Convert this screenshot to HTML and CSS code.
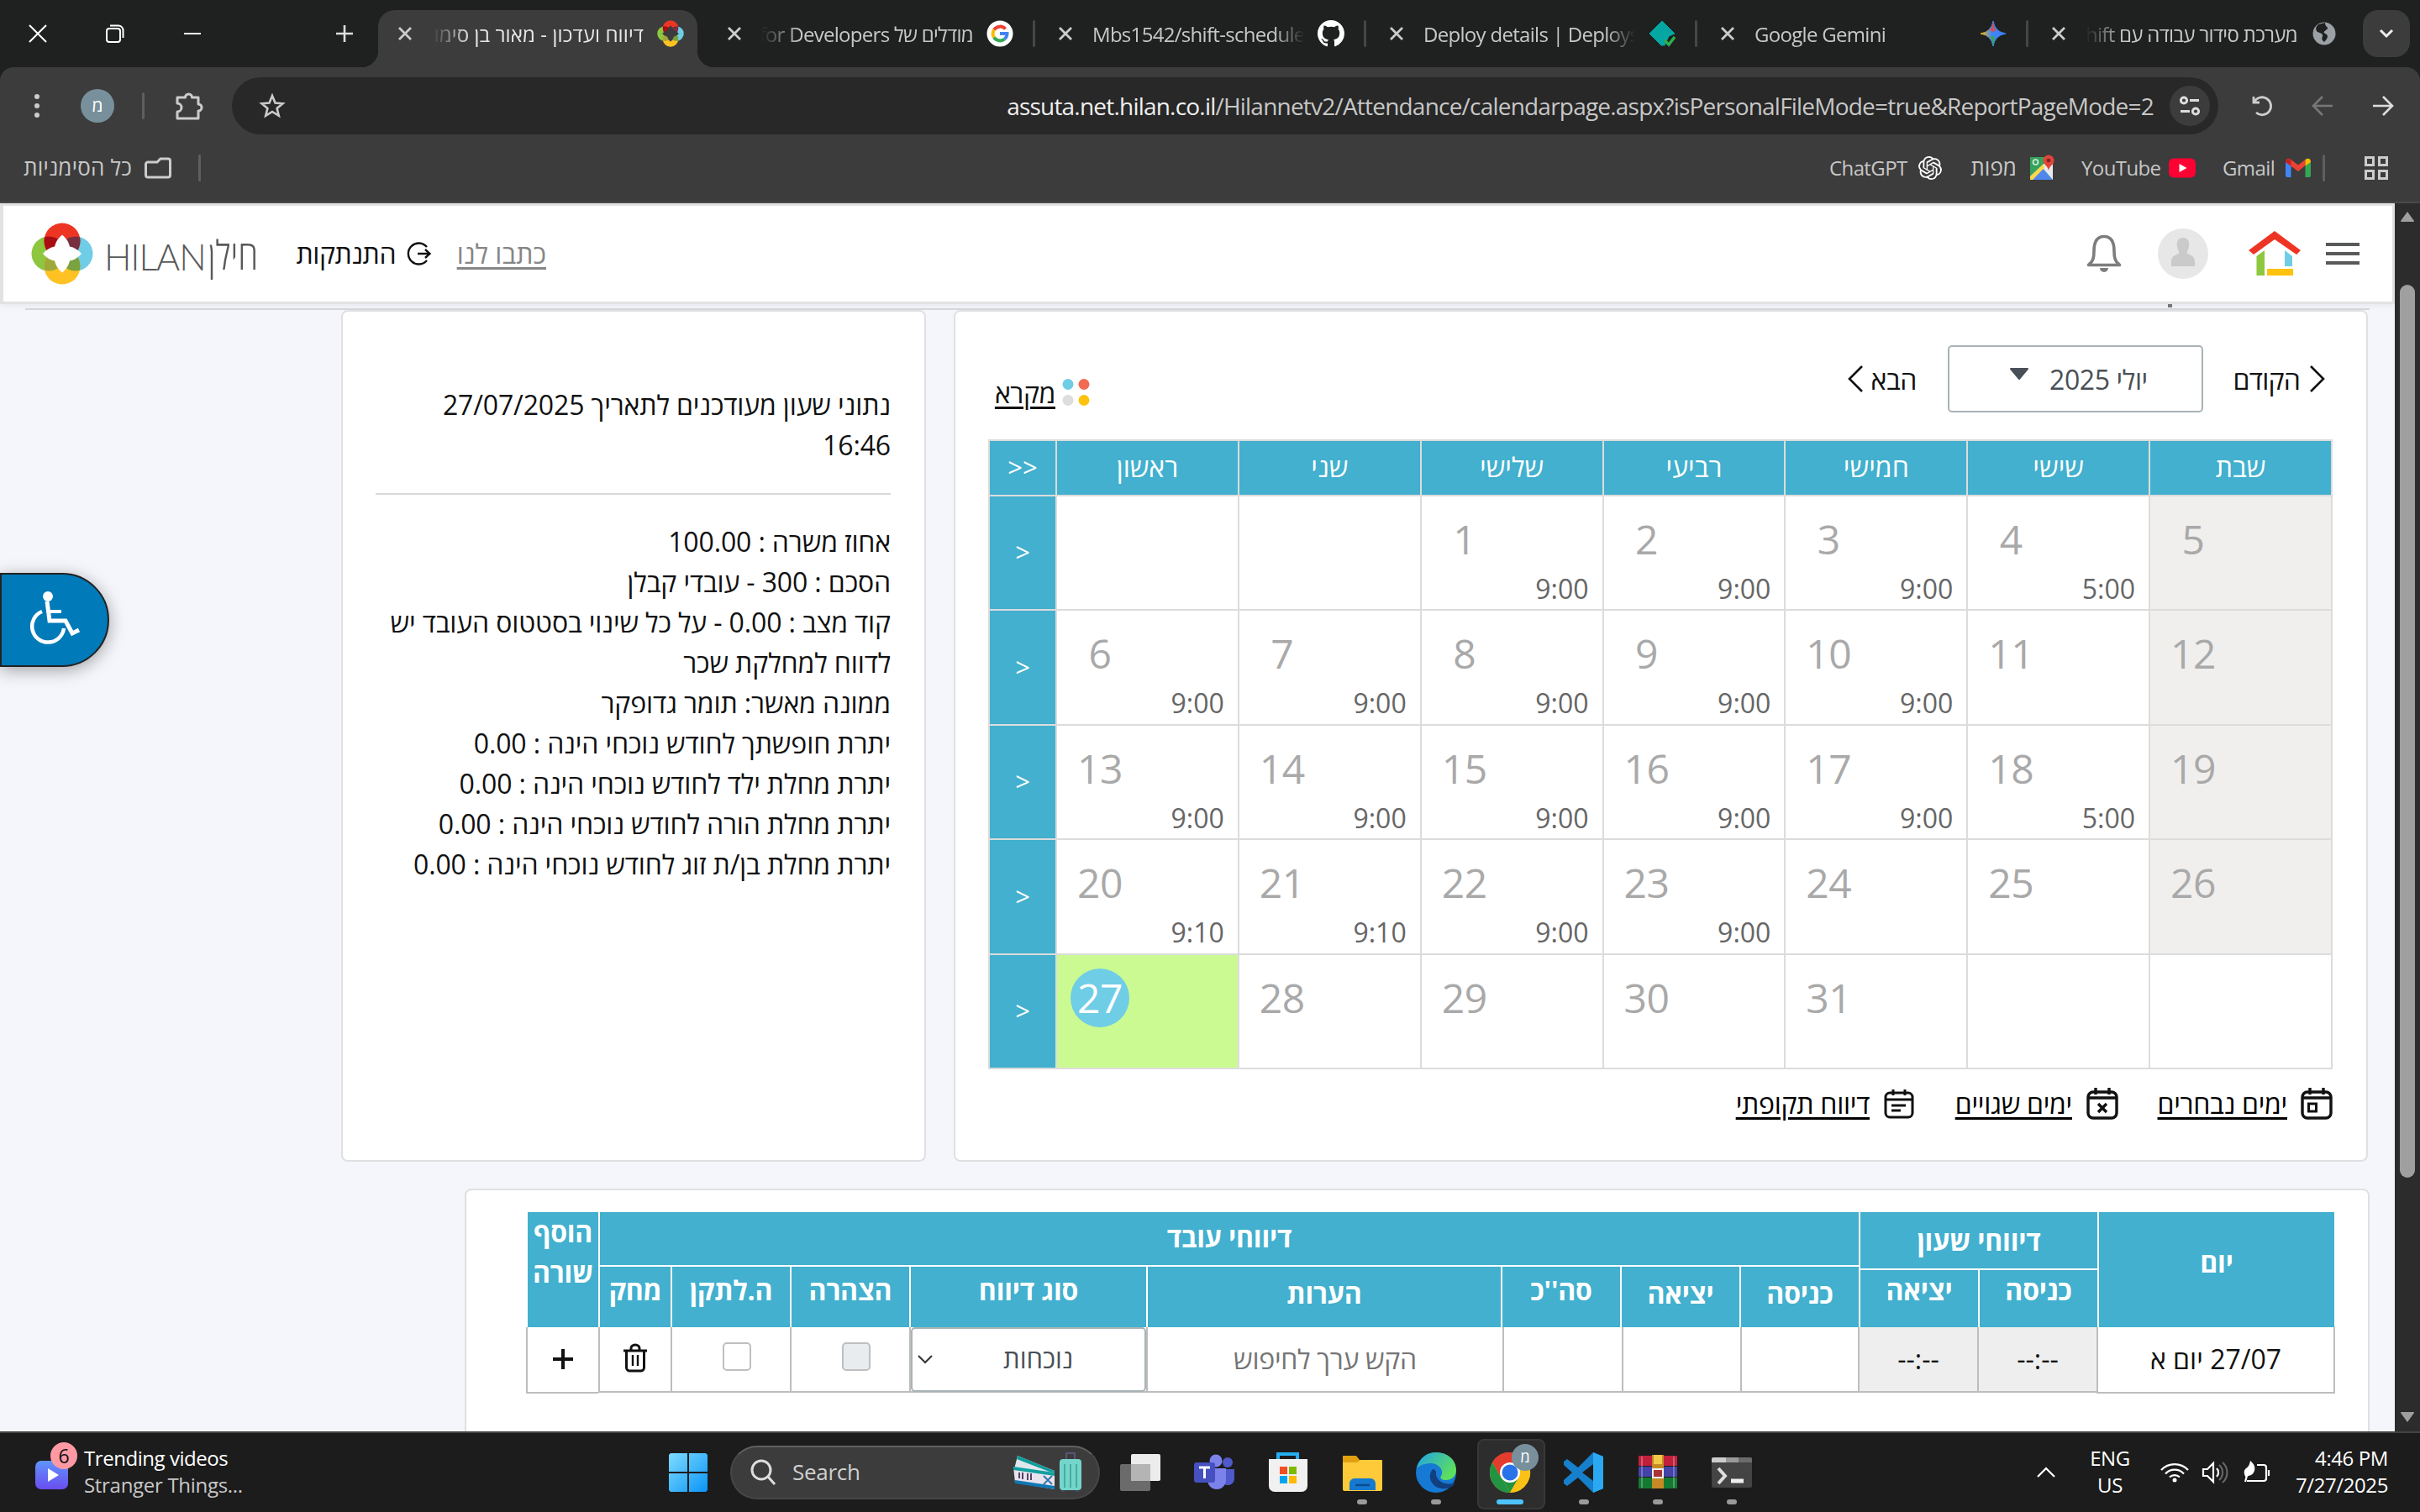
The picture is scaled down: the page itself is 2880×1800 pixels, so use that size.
FILE: index.html
```html
<!DOCTYPE html>
<html lang="he">
<head>
<meta charset="utf-8">
<title>דיווח ועדכון</title>
<link rel="stylesheet" href="styles.css">
</head>
<body>
<svg width="0" height="0" class="defs">
  <defs>
    <symbol id="close" viewBox="0 0 20 20"><path d="M3 3L17 17M17 3L3 17" stroke="currentColor" stroke-width="2.8" fill="none"/></symbol>
    <symbol id="hilan" viewBox="0 0 74 74">
      <clipPath id="ct"><circle cx="37" cy="22" r="21.5"/></clipPath>
      <clipPath id="cb"><circle cx="37" cy="52" r="21.5"/></clipPath>
      <circle cx="21" cy="37" r="20.5" fill="#8dc63f"/><circle cx="53" cy="37" r="20.5" fill="#6fcde6"/>
      <circle cx="37" cy="22" r="21.5" fill="#ee3524"/><circle cx="37" cy="52" r="21.5" fill="#ffc222"/>
      <circle cx="21" cy="37" r="20.5" fill="#a80d14" clip-path="url(#ct)"/>
      <circle cx="53" cy="37" r="20.5" fill="#77303f" clip-path="url(#ct)"/>
      <circle cx="21" cy="37" r="20.5" fill="#9fa93a" clip-path="url(#cb)"/>
      <circle cx="53" cy="37" r="20.5" fill="#7aa23f" clip-path="url(#cb)"/>
      <path class="star" d="M37 14.500Q44 20 46 28.500Q54 30 60 37Q54 44 46 45.500Q44 54 37 59.500Q30 54 28 45.500Q20 44 14 37Q20 30 28 28.500Q30 20 37 14.500Z"/>
    </symbol>
    <linearGradient id="win" x1="0" y1="0" x2="1" y2="1"><stop offset="0" stop-color="#7fdcff"/><stop offset="1" stop-color="#0a94f5"/></linearGradient>
    <linearGradient id="gem" x1="0" y1="0" x2="1" y2="0"><stop offset="0" stop-color="#fbbc04"/><stop offset=".45" stop-color="#4285f4"/><stop offset="1" stop-color="#3b82f6"/></linearGradient>
    <linearGradient id="edg" x1="0" y1="0" x2="1" y2=".6"><stop offset="0" stop-color="#1fa2e8"/><stop offset="1" stop-color="#5fe05a"/></linearGradient>
    <linearGradient id="vid" x1="0" y1="0" x2="0" y2="1"><stop offset="0" stop-color="#5f95fb"/><stop offset="1" stop-color="#6a4df0"/></linearGradient>
  </defs>
</svg>

<div class="tabstrip">
  <div class="winctl">
    <svg width="24" height="24" viewBox="0 0 24 24"><path d="M2 2L22 22M22 2L2 22" stroke="#fff" stroke-width="2"/></svg>
    <svg width="24" height="24" viewBox="0 0 24 24" fill="none" stroke="#fff" stroke-width="2"><rect x="2" y="6" width="16" height="16" rx="3"/><path d="M6 2.500H16a5.500 5.500 0 0 1 5.500 5.500V17"/></svg>
    <svg width="24" height="24" viewBox="0 0 24 24"><path d="M2 12H22" stroke="#fff" stroke-width="2"/></svg>
  </div>
  <svg class="newtab" width="24" height="24" viewBox="0 0 24 24"><path d="M12 2V22M2 12H22" stroke="#ddd" stroke-width="2.600"/></svg>
  <div class="tab active"><svg class="x"><use href="#close"/></svg><span class="t he" dir="rtl">דיווח ועדכון - מאור בן סימון</span><svg class="fav dark"><use href="#hilan"/></svg></div>
  <div class="tab"><svg class="x"><use href="#close"/></svg><span class="t he" dir="rtl">מודלים של Google for Developers</span>
    <svg class="fav" viewBox="0 0 32 32"><circle cx="16" cy="16" r="15.500" fill="#fff"/><g fill="none" stroke-width="4"><path d="M22.500 10.500A8.500 8.500 0 0 0 9 11.500" stroke="#ea4335"/><path d="M9 11.500A8.500 8.500 0 0 0 9 20.500" stroke="#fbbc04"/><path d="M9 20.500A8.500 8.500 0 0 0 21.500 22.500" stroke="#34a853"/><path d="M16 16H24.500A8.500 8.500 0 0 1 21.500 22.500" stroke="#4285f4"/></g></svg></div>
  <div class="tab sep"><svg class="x"><use href="#close"/></svg><span class="t">Mbs1542/shift-scheduler</span>
    <svg class="fav" viewBox="0 0 16 16"><path fill="#fff" d="M8 0C3.580 0 0 3.580 0 8c0 3.540 2.290 6.530 5.470 7.590.400.070.550-.170.550-.380 0-.190-.010-.820-.010-1.490-2.010.370-2.530-.490-2.690-.940-.090-.230-.480-.940-.820-1.130-.280-.150-.680-.520-.010-.530.630-.010 1.080.580 1.230.820.720 1.210 1.870.870 2.330.660.070-.520.280-.870.510-1.070-1.780-.200-3.640-.890-3.640-3.950 0-.870.310-1.590.820-2.150-.080-.200-.360-1.020.080-2.120 0 0 .670-.210 2.200.820.640-.180 1.320-.270 2-.270s1.360.090 2 .270c1.530-1.040 2.200-.820 2.200-.820.440 1.100.160 1.920.080 2.120.510.560.820 1.270.820 2.150 0 3.070-1.870 3.750-3.650 3.950.290.250.540.730.540 1.480 0 1.070-.010 1.930-.010 2.200 0 .210.150.460.550.380A8.010 8.010 0 0 0 16 8c0-4.420-3.580-8-8-8z"/></svg></div>
  <div class="tab sep"><svg class="x"><use href="#close"/></svg><span class="t">Deploy details | Deploys</span>
    <svg class="fav" viewBox="0 0 32 32"><path d="M16 1L31 16L24 19L19 30L15 30L1 16Z" fill="#05a7a3" stroke="#05a7a3" stroke-linejoin="round"/><path d="M19 24L24 29L31 20" stroke="#2fae4d" stroke-width="3.500" fill="none"/></svg></div>
  <div class="tab sep"><svg class="x"><use href="#close"/></svg><span class="t">Google Gemini</span>
    <svg class="fav" viewBox="0 0 32 32"><path d="M16 1Q18 14 31 16Q18 18 16 31Q14 18 1 16Q14 14 16 1Z" fill="url(#gem)" stroke="url(#gem)"/><path d="M16 1Q17 10 19.500 12.500L16 14L12 12Q15 9 16 1Z" fill="#ea4335" opacity=".8"/><path d="M16 31Q15 22 12.500 19.500L17 19L18 22Z" fill="#34a853"/></svg></div>
  <div class="tab sep"><svg class="x"><use href="#close"/></svg><span class="t he" dir="rtl">מערכת סידור עבודה עם shift</span>
    <svg class="fav" viewBox="0 0 32 32"><circle cx="16" cy="16" r="13.500" fill="#9aa0a6"/><path d="M9 5C6 8 5 11 8 14L13 16C16 19 12 20 14 24L16 26C20 22 22 18 17 16C13 14 19 12 20 10C21 8 17 8 17 3Z" fill="#1f2120"/></svg></div>
  <div class="tabsearch"><svg width="18" height="12" viewBox="0 0 18 12"><path d="M2 2L9 9L16 2" stroke="#eee" stroke-width="3" fill="none"/></svg></div>
</div>

<div class="chrome">
  <div class="toolbar">
    <svg class="dots" width="8" height="32" viewBox="0 0 8 32"><g fill="#ccc"><circle cx="4" cy="5" r="3"/><circle cx="4" cy="16" r="3"/><circle cx="4" cy="27" r="3"/></g></svg>
    <span class="me">מ</span><i class="vsep"></i>
    <svg class="puz" width="36" height="36" viewBox="0 0 36 36"><path d="M4 8H13.500A4 4 0 0 1 21.500 8H29V16A4 4 0 0 1 29 24V33H4V25A5 5 0 0 0 4 15Z" fill="none" stroke="#ccc" stroke-width="3" stroke-linejoin="round"/></svg>
    <div class="omni">
      <svg width="32" height="32" viewBox="0 0 32 32"><path d="M16 4L19.500 12.500L28.500 13.200L21.600 19L23.800 27.800L16 23L8.200 27.800L10.400 19L3.500 13.200L12.500 12.500Z" fill="none" stroke="#ccc" stroke-width="2.600"/></svg>
      <span class="url"><b>assuta.net.hilan.co.il</b>/Hilannetv2/Attendance/calendarpage.aspx?isPersonalFileMode=true&amp;ReportPageMode=2</span>
      <span class="site"><svg width="26" height="26" viewBox="0 0 26 26" fill="none" stroke="#ddd" stroke-width="3"><circle cx="6" cy="6.500" r="3.600"/><path d="M13 6.500H24M2 19.500H13"/><circle cx="20" cy="19.500" r="3.600"/></svg></span>
    </div>
    <svg class="rel" width="28" height="28" viewBox="0 0 28 28"><path d="M4 3V10H11M4.500 10A10.500 10.500 0 1 1 7 22" fill="none" stroke="#ccc" stroke-width="2.800"/></svg>
    <svg class="bk" width="26" height="26" viewBox="0 0 26 26"><path d="M25 13H3M13 2L2 13L13 24" fill="none" stroke="#777" stroke-width="2.600"/></svg>
    <svg width="26" height="26" viewBox="0 0 26 26"><path d="M1 13H23M13 2L24 13L13 24" fill="none" stroke="#ddd" stroke-width="2.600"/></svg>
  </div>
  <div class="bookmarks">
    <span class="he all" dir="rtl">כל הסימניות</span>
    <svg width="34" height="26" viewBox="0 0 34 26"><path d="M5 6H16L20 2H29A2.500 2.500 0 0 1 31.500 4.500V21.500A2.500 2.500 0 0 1 29 24H5A2.500 2.500 0 0 1 2.500 21.500V8.500A2.500 2.500 0 0 1 5 6Z" fill="none" stroke="#ccc" stroke-width="3"/></svg>
    <i class="vsep"></i>
    <div class="bm-right">
      <span class="bm gpt">ChatGPT</span>
      <svg width="28" height="28" viewBox="0 0 24 24" fill="#fff"><path d="M22.2819 9.8211a5.9847 5.9847 0 0 0-.5157-4.9108 6.0462 6.0462 0 0 0-6.5098-2.9A6.0651 6.0651 0 0 0 4.9807 4.1818a5.9847 5.9847 0 0 0-3.9977 2.9 6.0462 6.0462 0 0 0 .7427 7.0966 5.98 5.98 0 0 0 .511 4.9107 6.051 6.051 0 0 0 6.5146 2.9001A5.9847 5.9847 0 0 0 13.2599 24a6.0557 6.0557 0 0 0 5.7718-4.2058 5.9894 5.9894 0 0 0 3.9977-2.9001 6.0557 6.0557 0 0 0-.7475-7.0729zm-9.022 12.6081a4.4755 4.4755 0 0 1-2.8764-1.0408l.1419-.0804 4.7783-2.7582a.7948.7948 0 0 0 .3927-.6813v-6.7369l2.02 1.1686a.071.071 0 0 1 .038.052v5.5826a4.504 4.504 0 0 1-4.4945 4.4944zm-9.6607-4.1254a4.4708 4.4708 0 0 1-.5346-3.0137l.142.0852 4.783 2.7582a.7712.7712 0 0 0 .7806 0l5.8428-3.3685v2.3324a.0804.0804 0 0 1-.0332.0615L9.74 19.9502a4.4992 4.4992 0 0 1-6.1408-1.6464zM2.3408 7.8956a4.485 4.485 0 0 1 2.3655-1.9728V11.6a.7664.7664 0 0 0 .3879.6765l5.8144 3.3543-2.0201 1.1685a.0757.0757 0 0 1-.071 0l-4.8303-2.7865A4.504 4.504 0 0 1 2.3408 7.872zm16.5963 3.8558L13.1038 8.364 15.1192 7.2a.0757.0757 0 0 1 .071 0l4.8303 2.7913a4.4944 4.4944 0 0 1-.6765 8.1042v-5.6772a.79.79 0 0 0-.407-.667zm2.0107-3.0231l-.142-.0852-4.7735-2.7818a.7759.7759 0 0 0-.7854 0L9.409 9.2297V6.8974a.0662.0662 0 0 1 .0284-.0615l4.8303-2.7866a4.4992 4.4992 0 0 1 6.6802 4.66zM8.3065 12.863l-2.02-1.1638a.0804.0804 0 0 1-.038-.0567V6.0742a4.4992 4.4992 0 0 1 7.3757-3.4537l-.142.0805L8.704 5.459a.7948.7948 0 0 0-.3927.6813zm1.0976-2.3654l2.602-1.4998 2.6069 1.4998v2.9994l-2.5974 1.4997-2.6067-1.4997Z"/></svg>
      <span class="bm he map" dir="rtl">מפות</span>
      <svg width="32" height="32" viewBox="0 0 32 32"><path d="M2 3H29V30H2Z" fill="#35a35c"/><path d="M2 30L16 14L29 30Z" fill="#4f87ec"/><path d="M2 30V26L24 6L29 10V30L17 16L5 30Z" fill="#e8eaed"/><path d="M2 26L18 11L19 16L5 30H2Z" fill="#fdd64b"/><path d="M6 30L17 18L27 30Z" fill="#4f87ec"/><circle cx="8.500" cy="9" r="3" fill="none" stroke="#d8efdf" stroke-width="1.600"/><path d="M24 19C23 13 17.500 12 17.500 7A6.500 6.500 0 0 1 30.500 7C30.500 12 25 13 24 19Z" fill="#e0453a"/><circle cx="24" cy="7" r="2.300" fill="#7b231e"/></svg>
      <span class="bm yt">YouTube</span>
      <svg width="32" height="24" viewBox="0 0 32 24"><rect width="32" height="23" y=".5" rx="6" fill="#ff0033"/><path d="M12.500 7L21.500 12L12.500 17Z" fill="#fff"/></svg>
      <span class="bm gm">Gmail</span>
      <svg width="30" height="24" viewBox="0 0 30 24"><path d="M0 5L6.500 9V23H2A2 2 0 0 1 0 21Z" fill="#4285f4"/><path d="M30 5L23.500 9V23H28A2 2 0 0 0 30 21Z" fill="#34a853"/><path d="M0 5C0 1 4-.5 6.500 2L15 8.500L23.500 2V9L15 16L0 5Z" fill="#ea4335"/><path d="M23.500 2C27-.5 30 1 30 5L23.500 9.500Z" fill="#fbbc04"/><path d="M0 5C0 1 3.500 0 6.500 2V9.500Z" fill="#c5221f"/></svg>
      <i class="vsep"></i>
      <svg class="apps" width="28" height="28" viewBox="0 0 28 28" fill="none" stroke="#ccc" stroke-width="3"><path d="M1.500 1.500H10.500V10.500H1.500ZM17.500 1.500H26.500V10.500H17.500ZM1.500 17.500H10.500V26.500H1.500ZM17.500 17.500H26.500V26.500H17.500Z"/></svg>
    </div>
  </div>
</div>

<div class="view">
  <div class="page">
    <header class="hdr">
      <svg class="logo" width="74" height="74"><use href="#hilan"/></svg>
      <span class="brand">HILAN</span><span dir="rtl" class="brand-he">חילן</span>
      <span class="logout" dir="rtl">התנתקות</span>
      <svg class="out" width="30" height="30" viewBox="0 0 30 30" fill="none" stroke="#111" stroke-width="2.400"><path d="M25 7A12.500 12.500 0 1 0 25 23"/><path d="M14 15H28M23 10L28.500 15L23 20"/></svg>
      <span class="write" dir="rtl">כתבו לנו</span>
      <svg class="bell" width="40" height="46" viewBox="0 0 40 46"><path d="M1.500 36.500C7 32 8 28 8 20C8 8 12 2.500 20 2.500S32 8 32 20C32 28 33 32 38.500 36.500Z" fill="none" stroke="#7d7d7d" stroke-width="3.600" stroke-linejoin="round"/><path d="M15 40H25A5 5 0 0 1 15 40Z" fill="#7d7d7d"/></svg>
      <svg class="user" width="60" height="60" viewBox="0 0 60 60"><circle cx="30" cy="30" r="30" fill="#e7e7e7"/><path d="M30 11C36 11 38 16 37 21C36.500 25 35 27 34.500 29C37 32 44 31 44 40V45H16V40C16 31 23 32 25.500 29C25 27 23.500 25 23 21C22 16 24 11 30 11Z" fill="#cacaca"/></svg>
      <svg class="home" width="62" height="54" viewBox="0 0 62 54"><path d="M0 23L31 0L62 23L57 28L31 10L6 28Z" fill="#ee3524"/><path d="M9.500 30L19 23V53H9.500Z" fill="#8dc63f"/><path d="M43 23L52 30V42H43Z" fill="#6fcde6"/><rect x="22" y="45" width="31" height="8" fill="#ffc20e"/></svg>
      <div class="burger"><i></i><i></i><i></i></div>
    </header>
    <div class="strip"><i></i></div>
    <div class="cards">
      <section class="card info" dir="rtl">
        <p class="upd">נתוני שעון מעודכנים לתאריך 27/07/2025 16:46</p>
        <div class="list">אחוז משרה : 100.00<br>הסכם : 300 - עובדי קבלן<br>קוד מצב : 0.00 - על כל שינוי בסטטוס העובד יש<br>לדווח למחלקת שכר<br>ממונה מאשר: תומר גדופקר<br>יתרת חופשתך לחודש נוכחי הינה : 0.00<br>יתרת מחלת ילד לחודש נוכחי הינה : 0.00<br>יתרת מחלת הורה לחודש נוכחי הינה : 0.00<br>יתרת מחלת בן/ת זוג לחודש נוכחי הינה : 0.00</div>
      </section>
      <section class="card cal">
        <div class="calnav">
          <span class="legend" dir="rtl">מקרא</span>
          <svg class="ldots" width="34" height="34" viewBox="0 0 34 34"><circle cx="7" cy="7.500" r="6.500" fill="#6fcde6"/><circle cx="26" cy="7.500" r="6.500" fill="#f26a50"/><circle cx="7" cy="26.500" r="6.500" fill="#ddd"/><circle cx="26" cy="26.500" r="6.500" fill="#ffc20e"/></svg>
          <svg class="cnext" width="20" height="34" viewBox="0 0 20 34"><path d="M18 2L3 17L18 32" fill="none" stroke="#111" stroke-width="2.600"/></svg>
          <span class="nx" dir="rtl">הבא</span>
          <div class="month"><svg width="24" height="14" viewBox="0 0 24 14"><path d="M2 1H22L12 13Z" fill="#495057" stroke="#495057" stroke-width="2" stroke-linejoin="round"/></svg><span dir="rtl">יולי 2025</span></div>
          <span class="pv" dir="rtl">הקודם</span>
          <svg width="20" height="34" viewBox="0 0 20 34"><path d="M2 2L17 17L2 32" fill="none" stroke="#111" stroke-width="2.600"/></svg>
        </div>
        <table class="grid">
          <tr class="h"><th class="w">&gt;&gt;</th><th>ראשון</th><th>שני</th><th>שלישי</th><th>רביעי</th><th>חמישי</th><th>שישי</th><th>שבת</th></tr>
          <tr><th class="w">&gt;</th><td></td><td></td><td><b>1</b><u>9:00</u></td><td><b>2</b><u>9:00</u></td><td><b>3</b><u>9:00</u></td><td><b>4</b><u>5:00</u></td><td class="s"><b>5</b></td></tr>
          <tr><th class="w">&gt;</th><td><b>6</b><u>9:00</u></td><td><b>7</b><u>9:00</u></td><td><b>8</b><u>9:00</u></td><td><b>9</b><u>9:00</u></td><td><b>10</b><u>9:00</u></td><td><b>11</b></td><td class="s"><b>12</b></td></tr>
          <tr><th class="w">&gt;</th><td><b>13</b><u>9:00</u></td><td><b>14</b><u>9:00</u></td><td><b>15</b><u>9:00</u></td><td><b>16</b><u>9:00</u></td><td><b>17</b><u>9:00</u></td><td><b>18</b><u>5:00</u></td><td class="s"><b>19</b></td></tr>
          <tr><th class="w">&gt;</th><td><b>20</b><u>9:10</u></td><td><b>21</b><u>9:10</u></td><td><b>22</b><u>9:00</u></td><td><b>23</b><u>9:00</u></td><td><b>24</b></td><td><b>25</b></td><td class="s"><b>26</b></td></tr>
          <tr><th class="w">&gt;</th><td class="today"><b>27</b></td><td><b>28</b></td><td><b>29</b></td><td><b>30</b></td><td><b>31</b></td><td></td><td></td></tr>
        </table>
        <div class="callinks">
          <span dir="rtl" class="l1">דיווח תקופתי</span>
          <svg class="i1" width="36" height="36" viewBox="0 0 36 36" fill="none" stroke="#111" stroke-width="3"><rect x="2" y="5" width="32" height="29" rx="5"/><path d="M2 13H34M11 1V8M25 1V8M9 20H26M9 26H20"/></svg>
          <span dir="rtl" class="l2">ימים שגויים</span>
          <svg class="i2" width="38" height="38" viewBox="0 0 38 38" fill="none" stroke="#111" stroke-width="3.400"><rect x="2" y="5" width="34" height="31" rx="6"/><path d="M2 12H36M11 0V8M27 0V8M14 19L24 29M24 19L14 29"/></svg>
          <span dir="rtl" class="l3">ימים נבחרים</span>
          <svg width="38" height="38" viewBox="0 0 38 38" fill="none" stroke="#111" stroke-width="3.400"><rect x="2" y="5" width="34" height="31" rx="6"/><path d="M2 12H36M11 0V8M27 0V8"/><rect x="9.500" y="19" width="9" height="9" stroke-width="3"/></svg>
        </div>
      </section>
    </div>
    <section class="card rep">
      <div class="rh">
        <div class="hc c84 add">הוסף<br>שורה</div>
        <div class="grp work">
          <div class="hc top">דיווחי עובד</div>
          <div class="sub"><div class="hc c84">מחק</div><div class="hc c140">ה.לתקן</div><div class="hc c140">הצהרה</div><div class="hc c280">סוג דיווח</div><div class="hc c420 lo">הערות</div><div class="hc c140">סה''כ</div><div class="hc c140 lo">יציאה</div><div class="hc c140 lo">כניסה</div></div>
        </div>
        <div class="grp clock">
          <div class="hc top">דיווחי שעון</div>
          <div class="sub"><div class="hc c140">יציאה</div><div class="hc c140">כניסה</div></div>
        </div>
        <div class="hc c280 day">יום</div>
      </div>
      <div class="rb">
        <div class="bc a end"><svg width="24" height="24" viewBox="0 0 24 24"><path d="M12 0V24M0 12H24" stroke="#111" stroke-width="4"/></svg></div>
        <div class="bc a"><svg width="30" height="34" viewBox="0 0 30 34" fill="none" stroke="#111" stroke-width="3"><path d="M1 8H29M10 7V5A5 4 0 0 1 20 5V7M4.500 8V28A4 4 0 0 0 8.500 32H21.500A4 4 0 0 0 25.500 28V8"/><path d="M12 13V26M18 13V26" stroke-width="2.400"/></svg></div>
        <div class="bc b"><i class="chk"></i></div>
        <div class="bc b"><i class="chk off"></i></div>
        <div class="bc sel"><div class="selbox"><svg width="18" height="12" viewBox="0 0 18 12"><path d="M1 2L9 10L17 2" fill="none" stroke="#333" stroke-width="2"/></svg><span dir="rtl">נוכחות</span></div></div>
        <div class="bc note" dir="rtl">הקש ערך לחיפוש</div>
        <div class="bc b"></div><div class="bc k"></div><div class="bc k"></div>
        <div class="bc b g">--:--</div><div class="bc b g">--:--</div>
        <div class="bc last end" dir="rtl">27/07 יום א</div>
      </div>
    </section>
    <div class="a11y"><svg width="60" height="62" viewBox="0 0 60 62" fill="none" stroke="#fff" stroke-width="4.500"><circle cx="21" cy="6" r="6" fill="#fff" stroke="none"/><path d="M20 12L23 35H42L50 50L58 46" stroke-width="5"/><path d="M22 24H37" stroke-width="4"/><path d="M14 24A19 19 0 1 0 40 44"/></svg></div>
  </div>
  <div class="scroll"><svg width="18" height="14" viewBox="0 0 18 14"><path d="M9 1L17 12Q17 13 16 13H2Q1 13 1 12Z" fill="#9f9f9f"/></svg><i></i><svg class="dn" width="18" height="14" viewBox="0 0 18 14"><path d="M9 13L17 2Q17 1 16 1H2Q1 1 1 2Z" fill="#9f9f9f"/></svg></div>
</div>

<footer class="task">
  <div class="widget"><svg width="40" height="36" viewBox="0 0 40 36"><rect width="39" height="34" y="1" rx="7" fill="url(#vid)"/><path d="M15 10L28 18L15 26Z" fill="#fff"/></svg><span class="badge">6</span></div>
  <div class="news"><span class="n1">Trending videos</span><span class="n2">Stranger Things...</span></div>
  <svg class="start" width="46" height="46" viewBox="0 0 46 46" fill="url(#win)"><path d="M2 0H22V22H0V2ZM24 0H44L46 2V22H24ZM0 24H22V46H2L0 44ZM24 24H46V44L44 46H24Z"/></svg>
  <div class="search">
    <svg width="32" height="32" viewBox="0 0 32 32" fill="none" stroke="#ddd" stroke-width="3"><circle cx="14" cy="13" r="11"/><path d="M22 21L30 30"/></svg><span>Search</span>
    <svg class="trip" width="84" height="48" viewBox="0 0 84 48"><path d="M6 4L50 22L46 34L2 20Z" fill="#dfe8ec"/><path d="M6 4L50 22L49 25L5 8Z" fill="#119c9c"/><path d="M1 17L50 24V44L3 36Z" fill="#e8e3ee"/><path d="M1 17L50 24V28L1 21Z" fill="#13a0a0"/><path d="M3 33L50 40V44L3 37Z" fill="#0e78b5"/><path d="M8 24V31M12 24V32M18 25V33M22 25V33" stroke="#546" stroke-width="2"/><path d="M37 28L47 38M47 28L37 38" stroke="#37a" stroke-width="2"/><path d="M64 8V1H74V8" fill="none" stroke="#557" stroke-width="2"/><rect x="56" y="8" width="26" height="37" rx="4" fill="#74d6ca"/><path d="M62 14V42M69 14V42M76 14V42" stroke="#3b9f96" stroke-width="1.500"/><path d="M58 46H62M75 46H79" stroke="#446" stroke-width="2"/></svg>
  </div>
  <div class="apps-row">
    <span class="app"><svg viewBox="0 0 48 48"><rect x="0" y="14" width="36" height="32" rx="2" fill="#6b6b6b"/><rect x="13" y="2" width="35" height="32" rx="2" fill="#ececec"/><path d="M13 14H36V34H13Z" fill="#b4b4b4"/></svg></span>
    <span class="app"><svg viewBox="0 0 48 48"><circle cx="40" cy="12" r="6" fill="#5059c9"/><path d="M30 20H48V32A8 8 0 0 1 36 38Z" fill="#5059c9"/><circle cx="26" cy="10" r="7.500" fill="#7b83eb"/><path d="M16 19H38V33A11 11 0 0 1 16 33Z" fill="#7b83eb"/><rect x="0" y="12" width="25" height="24" rx="3" fill="#4650c0"/><path d="M6 18H19M12.500 18V31" stroke="#fff" stroke-width="3"/></svg></span>
    <span class="app"><svg viewBox="0 0 48 48"><path d="M12 10V2H35V10" fill="none" stroke="#25aef0" stroke-width="4"/><path d="M1 8H47V40A7 7 0 0 1 40 47H8A7 7 0 0 1 1 40Z" fill="#f1f1f1"/><path d="M14 17H23V26H14Z" fill="#f25022"/><path d="M25 17H34V26H25Z" fill="#7fba00"/><path d="M14 28H23V37H14Z" fill="#00a4ef"/><path d="M25 28H34V37H25Z" fill="#ffb900"/></svg></span>
    <span class="app dot"><svg viewBox="0 0 48 48"><path d="M1 4H17L21 9H48V44H1Z" fill="#e0a010"/><path d="M1 12H18L22 9H46A2 2 0 0 1 48 11V44A2 2 0 0 1 46 46H3A2 2 0 0 1 1 44Z" fill="#ffca3a"/><path d="M9 45V37A6 6 0 0 1 15 31H34A6 6 0 0 1 40 37V45Z" fill="#1579cf"/><path d="M16 39H33" stroke="#0a4c94" stroke-width="2.500"/></svg></span>
    <span class="app dot"><svg viewBox="0 0 48 48"><circle cx="24" cy="24" r="24" fill="#1679d3"/><path d="M1 19C4 7 13 0 24 0C38 0 48 9 48 21C48 29 42 33 36 33C31 33 28 31 30 28C34 21 27 13 17 13C9 13 3 17 1 19Z" fill="url(#edg)"/><path d="M20 20C12 30 20 45 36 43C44 42 46 38 46 36C38 40 26 36 24 27C24 24 25 21 20 20Z" fill="#123f80"/></svg></span>
    <span class="app cur"><svg viewBox="0 0 48 48"><circle cx="24" cy="24" r="24" fill="#fbc116"/><path d="M24 24L3.200 12A24 24 0 0 1 44.800 12Z" fill="#e33b2e"/><path d="M3.200 12L13.600 30L24 48A24 24 0 0 1 3.200 12Z" fill="#229342"/><path d="M24 48L34.400 30L24 24L13.600 30Z" fill="#229342"/><path d="M24 48L34.400 30V12H44.800A24 24 0 0 1 24 48Z" fill="#fbc116"/><path d="M3.200 12L13.600 30L24 12H44.800A24 24 0 0 0 3.200 12Z" fill="#e33b2e"/><circle cx="24" cy="24" r="12" fill="#fff"/><circle cx="24" cy="24" r="9.500" fill="#2a72e8"/></svg><em>מ</em></span>
    <span class="app dot"><svg viewBox="0 0 48 48"><path d="M35 0L47 5V43L35 48L17 30L4 40L0 37V33L10 24L0 15V11L4 8L17 18Z" fill="#1780cc"/><path d="M35 0L47 5V43L35 48Z" fill="#2aa9f2"/><path d="M35 14V34L22 24Z" fill="#1c1c1c"/></svg></span>
    <span class="app dot"><svg viewBox="0 0 48 48"><rect x="1" y="4" width="46" height="12" fill="#c0203c"/><rect x="1" y="17" width="46" height="12" fill="#4343a8"/><rect x="1" y="30" width="46" height="13" fill="#147a32"/><rect x="17" y="3" width="14" height="40" fill="#c58a25"/><path d="M19 3H29V14H19Z" fill="#f2c84a"/><rect x="18" y="20" width="12" height="10" fill="#a33" stroke="#eee" stroke-width="2"/><path d="M5 5V42M43 5V42" stroke="#fff" stroke-width="1.500" opacity=".35"/></svg></span>
    <span class="app dot"><svg viewBox="0 0 48 48"><rect x="0" y="6" width="48" height="36" rx="2" fill="#444"/><path d="M0 8A2 2 0 0 1 2 6H17V12H0Z" fill="#ccc"/><path d="M17 6H32V12H17Z" fill="#999"/><path d="M32 6H46A2 2 0 0 1 48 8V12H32Z" fill="#6b6b6b"/><path d="M8 19L16 28L8 37" fill="none" stroke="#ddd" stroke-width="4"/><path d="M23 34H38" stroke="#eee" stroke-width="5"/></svg></span>
  </div>
  <div class="tray">
    <svg width="22" height="14" viewBox="0 0 22 14"><path d="M1 12L11 2L21 12" fill="none" stroke="#fff" stroke-width="2.200"/></svg>
    <div class="lang">ENG<br>US</div>
    <svg class="wifi" width="34" height="24" viewBox="0 0 34 24" fill="none" stroke="#fff" stroke-width="2.300"><path d="M1 9A22 22 0 0 1 33 9M6 13.500A15 15 0 0 1 28 13.500M11 17.500A9 9 0 0 1 23 17.500"/><circle cx="17" cy="21" r="2.500" fill="#fff" stroke="none"/></svg>
    <svg class="snd" width="32" height="28" viewBox="0 0 32 28" fill="none" stroke="#fff" stroke-width="2.200"><path d="M2 10H7L14 3V25L7 18H2Z"/><path d="M18 9A7 7 0 0 1 18 19"/><path d="M21 5A12 12 0 0 1 21 23M25 2A16 16 0 0 1 25 26" stroke="#666"/></svg>
    <svg class="bat" width="32" height="28" viewBox="0 0 32 28" fill="none" stroke="#fff" stroke-width="2.200"><path d="M17 5H25A3 3 0 0 1 28 8V21A3 3 0 0 1 25 24H5"/><path d="M31 11V18"/><path d="M9 0C14 4 16 9 13 14C11 18 7 17 4 20C1 16 1 11 4 9C7 7 8 5 9 0Z" fill="#fff" stroke="none"/><path d="M6 14L3 25"/></svg>
    <div class="clk">4:46 PM<br>7/27/2025</div>
  </div>
</footer>
</body>
</html>
```
FILE: styles.css
```css
* { box-sizing: border-box; }
body { margin: 0; width: 2880px; height: 1800px; overflow: hidden; background: #1f2120; font-family: "Open Sans", "Noto Sans", "Liberation Sans", sans-serif; color: #111; }
svg { flex: none; display: block; overflow: visible; }
.defs { position: absolute; }
.star { fill: var(--star, #fff); }
.dark { --star: #3c3c3c; }

/* tab strip */
.tabstrip { display: flex; height: 80px; align-items: center; }
.winctl { display: flex; gap: 68px; padding-left: 33px; width: 398px; }
.newtab { margin-right: 20px; }
.tab { width: 394px; height: 68px; margin-top: 12px; padding: 0 22px 12px 28px; display: flex; align-items: center; flex: none; position: relative; color: #c7c7c7; }
.tab .x { width: 20px; height: 20px; color: #ccc; }
.tab .t { width: 252px; margin-left: 22px; white-space: nowrap; overflow: hidden; font-size: 24px; letter-spacing: -0.7px; line-height: 36px; padding-top: 1px; -webkit-mask-image: linear-gradient(90deg, #000 86%, transparent); mask-image: linear-gradient(90deg, #000 86%, transparent); }
.tab .t.he { -webkit-mask-image: linear-gradient(270deg, #000 82%, transparent); mask-image: linear-gradient(270deg, #000 82%, transparent); }
.tab .fav { width: 32px; height: 32px; margin-left: 16px; }
.tab.sep::before { content: ""; position: absolute; left: -1px; top: 12px; width: 3px; height: 32px; background: #454746; border-radius: 2px; }
.tab.active { background: #3c3c3c; color: #e6e6e6; border-radius: 20px 20px 0 0; width: 380px; margin-right: 6px; margin-left: 8px; padding-left: 22px; padding-right: 14px; }
.tab.active .t { letter-spacing: 0.1px; }
.tab.active::before, .tab.active::after { content: ""; position: absolute; bottom: 0; width: 20px; height: 20px; }
.tab.active::before { left: -20px; background: radial-gradient(circle at 0 0, transparent 20px, #3c3c3c 20.5px); }
.tab.active::after { right: -20px; background: radial-gradient(circle at 100% 0, transparent 20px, #3c3c3c 20.5px); }
.tabsearch { margin-left: auto; margin-right: 12px; width: 56px; height: 56px; border-radius: 18px; background: #3c3c3c; display: flex; align-items: center; justify-content: center; }

/* toolbar and bookmarks */
.chrome { background: #3c3c3c; height: 162px; border-radius: 16px 16px 0 0; border-bottom: 2px solid #4a4a4a; }
.toolbar { display: flex; align-items: center; height: 92px; padding-left: 40px; }
.me { width: 40px; height: 40px; border-radius: 50%; background: #78909c; color: #fff; font-size: 21px; text-align: center; line-height: 38px; margin-left: 48px; }
.vsep { width: 3px; height: 32px; border-radius: 2px; background: #5f5f5f; }
.toolbar .vsep { margin-left: 33px; }
.puz { margin-left: 35px; }
.omni { width: 2364px; height: 68px; border-radius: 34px; background: #282828; display: flex; align-items: center; padding: 0 10px 0 32px; margin-left: 33px; }
.url { margin-left: auto; margin-right: 19px; font-size: 28px; letter-spacing: -0.79px; color: #c7c7c7; white-space: nowrap; }
.url b { font-weight: 400; color: #f0f0f0; }
.site { width: 48px; height: 48px; border-radius: 50%; background: #3c3c3c; display: flex; align-items: center; justify-content: center; }
.rel { margin-left: 38px; }
.bk { margin: 0 46px 0 45px; }
.bookmarks { display: flex; align-items: center; height: 56px; padding-left: 28px; font-size: 24px; color: #c7c7c7; }
.bookmarks span { margin-top: -2px; }
.all { width: 129px; margin-right: 14px; white-space: nowrap; font-size: 26px; letter-spacing: 0.2px; }
.bookmarks > .vsep { margin-left: 31px; }
.bm-right { margin-left: auto; display: flex; align-items: center; padding-right: 38px; }
.bm { white-space: nowrap; letter-spacing: -0.6px; }
.gpt { width: 106px; }
.map { width: 55px; margin-left: 34px; margin-right: 14px; font-size: 26px; letter-spacing: 0; }
.yt { width: 91px; margin-left: 31px; margin-right: 13px; }
.gm { width: 61px; margin-left: 32px; margin-right: 14px; }
.bm-right .vsep { margin-left: 14px; margin-right: 47px; }

/* viewport */
.view { display: flex; height: 1464px; border-bottom: 2px solid #444; }
.page { width: 2850px; height: 1462px; background: #f5f6fb; overflow: hidden; position: relative; font-size: 32px; }
.scroll { width: 30px; background: #2c2c2c; display: flex; flex-direction: column; align-items: center; padding-top: 9px; }
.scroll i { width: 18px; height: 1063px; margin-top: 74px; border-radius: 9px; background: #9f9f9f; }
.scroll .dn { margin-top: 278px; }
.hdr { height: 120px; background: #fff; border: 3px solid #e2e2e2; border-left-width: 4px; display: flex; align-items: center; padding-left: 33px; box-shadow: 0 2px 8px rgba(0,0,0,.06); }
.brand { font-family: Lato, "Open Sans", sans-serif; font-weight: 300; font-size: 43px; line-height: 60px; color: #58595b; margin-left: 13px; margin-top: 7px; width: 117px; letter-spacing: -1.1px; white-space: nowrap; }
.brand-he { font-weight: 300; font-size: 48px; line-height: 60px; margin-top: 1px; width: 66px; white-space: nowrap; color: #58595b; transform: scaleX(.8); transform-origin: 100% 50%; }
.logout { margin-left: 47px; width: 117px; white-space: nowrap; letter-spacing: -0.5px; margin-top: -2px; }
.out { margin-left: 12px; }
.write { margin-left: 32px; width: 105px; color: #868686; text-decoration: underline; text-decoration-thickness: 3px; text-underline-offset: 4px; white-space: nowrap; margin-top: -2px; }
.bell { margin-left: auto; }
.user { margin-left: 44px; }
.home { margin-left: 48px; }
.burger { width: 40px; margin-left: 30px; margin-right: 39px; display: grid; gap: 7px; }
.burger i { height: 4px; background: #58595b; }
.strip { height: 7px; margin: 0 30px; border-bottom: 2px solid #d5d6da; padding-left: 2550px; }
.strip i { display: block; width: 5px; height: 4px; background: #777; }
.card { background: #fff; border: 2px solid #dfe0e2; border-radius: 8px; }
.cards { display: flex; padding-left: 406px; gap: 33px; }
.info { width: 696px; height: 1014px; padding: 87px 40px 0 38px; letter-spacing: -0.14px; }
.upd { margin: 0; line-height: 48px; padding-bottom: 33px; border-bottom: 2px solid #d8d9db; width: 613px; }
.list { line-height: 48px; margin-top: 32px; white-space: nowrap; }
.cal { width: 1683px; height: 1014px; padding: 40px 40px 0 39px; }
.calnav { display: flex; height: 80px; align-items: center; width: 1600px; padding-left: 9px; letter-spacing: -0.4px; }
.legend { width: 71px; text-decoration: underline; text-decoration-thickness: 3px; text-underline-offset: 4px; white-space: nowrap; margin-top: 32px; }
.ldots { margin-left: 8px; margin-top: 32px; }
.cnext { margin-left: 900px; }
.nx { width: 55px; margin-left: 8px; white-space: nowrap; }
.month { margin-left: 37px; width: 304px; height: 80px; border: 2px solid #a9b3b6; border-radius: 5px; display: flex; align-items: center; padding-left: 71px; color: #495057; }
.month svg { margin-top: -12px; margin-right: 24px; }
.pv { width: 77px; margin: 0 11px 0 38px; white-space: nowrap; letter-spacing: -0.8px; }
.grid { border-collapse: collapse; table-layout: fixed; width: 1600px; margin-top: 32px; }
.grid th, .grid td { border: 2px solid #dcdcdc; padding: 0; }
.grid th { background: #42b0ce; color: #fff; font-weight: 400; line-height: 40px; padding-bottom: 2px; }
.grid .h th { height: 66px; }
.grid .w { width: 80px; font-size: 31px; }
.grid td { height: 136px; vertical-align: top; }
.grid tr:nth-child(odd) td { height: 137px; }
.grid td b { display: block; font-weight: 400; font-size: 48px; line-height: 70px; height: 70px; width: 70px; text-align: center; color: #a9a9a9; margin: 16px 0 0 16px; border-radius: 50%; letter-spacing: -0.4px; }
.grid td u { display: block; text-decoration: none; text-align: right; padding-right: 16px; color: #666; line-height: 44px; margin-top: 2px; height: 44px; }
.grid .s { background: #f0efee; }
.grid .today { background: #ccfa92; }
.grid .today b { background: #6fcde6; color: #fff; }
.callinks { display: flex; align-items: center; justify-content: flex-end; height: 48px; margin-top: 17px; letter-spacing: -0.3px; }
.callinks span { text-decoration: underline; text-decoration-thickness: 3px; text-underline-offset: 4px; white-space: nowrap; color: #000; margin-top: -1px; }
.callinks .l1 { width: 157px; margin-right: 17px; }
.callinks .l2 { width: 138px; margin-right: 17px; margin-left: 50px; }
.callinks .l3 { width: 153px; margin-right: 16px; margin-left: 48px; }

/* report table */
.rep { margin: 32px 0 0 553px; width: 2267px; height: 320px; padding: 26px 0 0 73px; }
.rh { display: flex; gap: 2px; height: 137px; color: #fff; font-weight: 700; font-size: 32px; letter-spacing: -0.2px; }
.hc { background: #42b0ce; text-align: center; line-height: 48px; white-space: nowrap; direction: rtl; }
.c84 { width: 84px; } .c140 { width: 140px; } .c280 { width: 280px; } .c420 { width: 420px; }
.grp { display: flex; flex-direction: column; gap: 2px; }
.sub { display: flex; gap: 2px; flex: 1; }
.sub .hc { padding-top: 4px; }
.sub .lo { padding-top: 8px; }
.work .top { height: 63px; padding-top: 6px; }
.clock .top { height: 67px; padding-top: 10px; }
.clock .sub .hc { padding-top: 0; }
.day { padding-top: 36px; }
.rb { display: flex; margin-left: -2px; }
.bc { height: 78px; border-left: 2px solid #bdbdbd; border-bottom: 2px solid #bdbdbd; display: flex; align-items: center; justify-content: center; padding-bottom: 2px; }
.bc.end { height: 79px; }
.a { width: 86px; } .b { width: 142px; } .k { width: 141px; }
.k + .k { width: 140px; }
.g { background: #eee; }
.sel { width: 282px; padding: 0; }
.selbox { width: 280px; height: 77px; border: 2px solid #a9b3b6; border-radius: 5px; display: flex; align-items: center; padding-left: 6px; color: #495057; font-size: 31px; }
.selbox span { margin-left: 84px; margin-top: -2px; }
.note { width: 424px; color: #757575; letter-spacing: -0.3px; }
.last { width: 284px; border-right: 2px solid #bdbdbd; }
.chk { width: 34px; height: 34px; border: 2px solid #bfbfbf; border-radius: 5px; margin: -4px 0 0 14px; }
.off { background: #e9ecef; }
.a11y { position: absolute; left: 0; top: 440px; width: 130px; height: 112px; border: 2px solid #222; background: #007ab8; border-radius: 0 56px 56px 0; box-shadow: 0 4px 20px rgba(0,0,0,.35); padding: 20px 0 0 34px; }

/* taskbar */
.task { height: 94px; background: #1c1c1c; display: flex; align-items: center; color: #fff; font-size: 24px; padding-left: 42px; }
.widget { position: relative; width: 58px; height: 52px; padding-top: 14px; margin-top: -6px; }
.badge { position: absolute; left: 18px; top: -7px; width: 32px; height: 32px; border-radius: 50%; background: #ff99a4; color: #111; text-align: center; line-height: 32px; font-size: 23px; }
.news { width: 202px; display: flex; flex-direction: column; line-height: 32px; white-space: nowrap; letter-spacing: -0.45px; margin-top: -3px; }
.n2 { color: #c8c8c8; letter-spacing: -0.3px; }
.start { margin-left: 494px; }
.search { margin-left: 27px; width: 440px; height: 64px; border-radius: 32px; background: #3c3c3c; border: 2px solid #474747; border-top-color: #606060; display: flex; align-items: center; padding-left: 21px; font-size: 26px; color: #d0d0d0; letter-spacing: -0.3px; }
.search span { margin-left: 19px; margin-top: -2px; }
.trip { margin-left: auto; margin-right: 18px; }
.apps-row { display: flex; margin-left: 4px; }
.app { width: 88px; height: 80px; display: flex; align-items: center; justify-content: center; position: relative; }
.app svg { width: 48px; height: 48px; }
.dot::after { content: ""; position: absolute; left: 38px; bottom: 2px; width: 12px; height: 6px; border-radius: 3px; background: #9a9a9a; }
.cur::before { content: ""; position: absolute; left: 5px; top: 0; width: 77px; height: 80px; background: #2d2d2d; border: 2px solid #383838; border-radius: 8px; }
.cur::after { content: ""; position: absolute; left: 28px; bottom: 2px; width: 32px; height: 6px; border-radius: 3px; background: #4cc2ff; }
.cur svg { position: relative; }
.cur em { position: absolute; left: 46px; top: 6px; width: 32px; height: 32px; border-radius: 50%; background: #78909c; font-style: normal; font-size: 18px; text-align: center; line-height: 30px; }
.tray { margin-left: auto; display: flex; align-items: center; line-height: 32px; letter-spacing: -0.4px; }
.lang { width: 60px; text-align: center; margin-left: 35px; margin-top: -2px; }
.wifi { margin-left: 30px; }
.snd { margin-left: 15px; }
.bat { margin-left: 17px; }
.clk { width: 125px; text-align: right; margin-right: 38px; margin-left: 16px; margin-top: -3px; white-space: nowrap; }
```
